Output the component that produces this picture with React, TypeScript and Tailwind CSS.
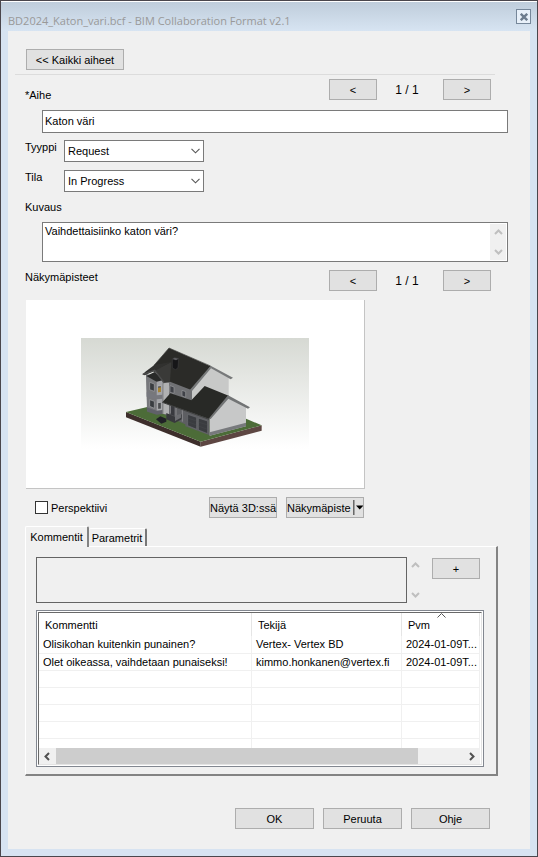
import React from 'react';

const BUTTON =
  'h-[21px] shrink-0 border border-[#adadad] bg-[#e1e1e1] flex items-center justify-center whitespace-nowrap hover:bg-[#e5f1fb] hover:border-[#0078d7]';

interface PagerProps {
  name: string;
}

const Pager: React.FC<PagerProps> = ({ name }) => (
  <div className="mr-[17px] flex items-center">
    <button type="button" aria-label={`${name}: previous`} className={`${BUTTON} w-12`}>
      &lt;
    </button>
    <span className="w-[66px] pr-[6px] text-center text-xs">1 / 1</span>
    <button type="button" aria-label={`${name}: next`} className={`${BUTTON} w-12`}>
      &gt;
    </button>
  </div>
);

interface ChevronProps {
  className?: string;
  direction: 'up' | 'down' | 'left' | 'right';
}

const CHEVRONS = {
  up: 'M1 6 L4.5 2.5 L8 6',
  down: 'M1 3 L4.5 6.5 L8 3',
  left: 'M6 1 L2.5 4.5 L6 8',
  right: 'M3 1 L6.5 4.5 L3 8',
};

const Chevron: React.FC<ChevronProps> = ({ className, direction }) => (
  <svg viewBox="0 0 9 9" className={`h-[9px] w-[9px] ${className ?? ''}`} fill="none" stroke="currentColor" strokeWidth="2">
    <path d={CHEVRONS[direction]} />
  </svg>
);

interface DropdownProps {
  id: string;
  label: string;
  options: string[];
}

const Dropdown: React.FC<DropdownProps> = ({ id, label, options }) => (
  <div className="flex h-[22px] items-start">
    <label htmlFor={id} className="w-[39px] shrink-0">
      {label}
    </label>
    <div className="relative w-[140px]">
      <select id={id} className="block h-[22px] w-full appearance-none border border-[#7a7a7a] bg-white pl-[3px] outline-none">
        {options.map((option) => (
          <option key={option}>{option}</option>
        ))}
      </select>
      <svg viewBox="0 0 9 6" className="pointer-events-none absolute right-1 top-2 h-[6px] w-[9px]" fill="none" stroke="#555" strokeWidth="1.1">
        <path d="M0.5 0.8 L4.5 4.8 L8.5 0.8" />
      </svg>
    </div>
  </div>
);

const House: React.FC = () => (
  <svg viewBox="-87 24 684 333" className="h-[111px] w-[228px]" role="img" aria-label="3D">
    <defs>
      <linearGradient id="sky" x1="0" y1="0" x2="0" y2="1">
        <stop offset="0" stopColor="#d6d9d3" />
        <stop offset="1" stopColor="#ffffff" />
      </linearGradient>
    </defs>
    <rect x="-87" y="24" width="684" height="333" fill="url(#sky)" />

    {/* plot */}
    <path d="M48 246 L272 335 L272 350 L48 262Z" fill="#3d2e2b" />
    <path d="M272 335 L455 286 L455 302 L272 350Z" fill="#5d4642" />
    <path d="M48 246 L112 231 L230 190 L455 286 L272 335Z" fill="#4c6c38" />

    {/* main house */}
    <path d="M108 132 L180 150 L246 178 L246 290 L160 252 L112 244Z" fill="#707174" />
    <path d="M246 177 L302 113 L356 143 L356 200 L246 260Z" fill="#c8c9c8" />
    <path d="M160 155 L177 158 L177 252 L160 252Z" fill="#b0b1b2" />

    {/* bay */}
    <path d="M109 135 L140 153 L140 252 L111 243Z" fill="#77787b" />
    <path d="M140 153 L158 150 L157 252 L140 252Z" fill="#a3a4a8" />
    <path d="M110 187 L140 196 L157 194 L157 206 L140 208 L110 200Z" fill="#77787e" />
    <path d="M110 232 L140 242 L157 240 L157 252 L140 254 L112 245Z" fill="#606169" />
    <path d="M119 157 L133 162 L133 184 L119 179Z M119 209 L133 214 L133 235 L119 229Z" fill="#393c40" stroke="#a4a5a8" strokeWidth="2" />
    <path d="M143 168 L154 167 L154 187 L143 188Z M143 218 L154 217 L154 237 L143 238Z" fill="#4b4d50" stroke="#c0c1c3" strokeWidth="2" />
    <path d="M144 173 L153 172 L153 186 L144 187Z" fill="#a58335" />

    {/* main roof with the front gable */}
    <path d="M177 54 L302 109 L246 181 L180 155 L128 122 L132 106Z" fill="#2b2b28" />
    <path d="M109 138 L134 126 L160 150 L140 155Z" fill="#292a29" />
    <path d="M133 121 L184 96 L180 156 L163 159Z" fill="#3a3a38" />
    <path d="M98 133 L106 125 L134 104 L184 96 L135 122 L104 136Z" fill="#31312f" />
    <path d="M98 133 L134 121 L163 159" fill="none" stroke="#4c4c4c" strokeWidth="4" />
    <path d="M302 107 L369 143 L362 148 L303 115 L246 183 L240 179Z" fill="#77797a" />
    <path d="M132 106 L177 54 L302 108" fill="none" stroke="#434341" strokeWidth="2" />
    <path d="M187 87 L194 83 L206 86 L204 113 L197 119 L187 114Z" fill="#161618" stroke="#454547" strokeWidth="1.5" />
    <path d="M187 87 L194 83 L206 86 L198 91Z" fill="#5c5c5f" />

    {/* upper windows */}
    <path d="M180 167 L192 171 L192 190 L180 187Z M216 181 L227 185 L227 202 L216 198Z" fill="#404248" stroke="#97999c" strokeWidth="2" />

    {/* porch */}
    <path d="M178 211 L229 232 L229 284 L178 262Z" fill="#5e5f63" />
    <path d="M180 219 L193 224 L193 258 L180 253Z" fill="#393a3f" />
    <path d="M198 220 L198 265 M181 221 L181 251 M217 235 L217 275" stroke="#88898c" strokeWidth="3" />
    <path d="M169 249 L195 260 L215 253 L215 268 L194 279 L169 268Z" fill="#38393d" />
    <path d="M195 257 L213 251 L213 263 L195 273Z" fill="#6c6d71" />
    <path d="M138 268 L151 259 L169 266 L169 275 L154 281Z" fill="#202126" />

    {/* garage */}
    <path d="M228 241 L299 265 L299 316 L226 289Z" fill="#5d5e62" />
    <path d="M233 253 L260 262 L260 298 L233 287Z M265 264 L293 273 L293 311 L265 300Z" fill="#3a3c40" stroke="#6e7073" strokeWidth="2" />
    <path d="M233 264 L260 273 M233 275 L260 285 M265 276 L293 285 M265 288 L293 298" stroke="#4d4f53" strokeWidth="1" />
    <path d="M299 266 L354 201 L408 226 L408 289 L299 317Z" fill="#c7c8c8" />
    <path d="M299 307 L408 278 L408 289 L299 317Z" fill="#77797c" />
    <path d="M284 168 L356 197 L299 267 L157 217 L181 190 L244 211Z" fill="#282926" />
    <path d="M354 196 L420 232 L414 236 L355 206 L302 267 L296 266Z" fill="#727475" />
    <path d="M157 217 L297 268" stroke="#3f403f" strokeWidth="3" />
  </svg>
);

const comments = [
  { text: 'Olisikohan kuitenkin punainen?', author: 'Vertex- Vertex BD', date: '2024-01-09T...' },
  { text: 'Olet oikeassa, vaihdetaan punaiseksi!', author: 'kimmo.honkanen@vertex.fi', date: '2024-01-09T...' },
  { text: '', author: '', date: '' },
  { text: '', author: '', date: '' },
  { text: '', author: '', date: '' },
  { text: '', author: '', date: '' },
];

const CommentTable: React.FC = () => (
  <div className="mr-3 mt-[7px] border border-[#828790] bg-white p-px">
    <div className="border border-b-[#e3e3e3] border-l-[#696969] border-r-[#e3e3e3] border-t-[#696969] pr-px">
      <table className="w-full table-fixed border-collapse text-left">
        <colgroup>
          <col />
          <col className="w-[150px]" />
          <col className="w-[78px]" />
        </colgroup>
        <thead>
          <tr className="h-[23px]">
            <th className="border-r border-[#e5e5e5] p-0 pl-[6px] font-normal">Kommentti</th>
            <th className="border-r border-[#e5e5e5] p-0 pl-[6px] font-normal">Tekijä</th>
            <th className="relative border-r border-[#e5e5e5] p-0 pl-[6px] font-normal">
              Pvm
              <svg viewBox="0 0 9 5" className="absolute left-[35px] top-0 h-[5px] w-[9px]" fill="none" stroke="#555">
                <path d="M0.5 4.5 L4.5 0.5 L8.5 4.5" />
              </svg>
            </th>
          </tr>
        </thead>
        <tbody>
          {comments.map((comment, i) => (
            <tr key={i} className="h-[17px] border-b border-[#f0f0f0] leading-[14px]">
              <td className="whitespace-nowrap border-r border-[#f0f0f0] p-0 pl-1">{comment.text}</td>
              <td className="whitespace-nowrap border-r border-[#f0f0f0] p-0 pl-1">{comment.author}</td>
              <td className="whitespace-nowrap border-r border-[#f0f0f0] p-0 pl-1">{comment.date}</td>
            </tr>
          ))}
          <tr className="h-[10px]">
            <td className="border-r border-[#f0f0f0] p-0" />
            <td className="border-r border-[#f0f0f0] p-0" />
            <td className="border-r border-[#f0f0f0] p-0" />
          </tr>
        </tbody>
      </table>
      <div className="flex h-4 items-center bg-[#f0f0f0] text-[#505050]">
        <div className="flex w-[17px] justify-center">
          <Chevron direction="left" />
        </div>
        <div className="flex h-full flex-1">
          <div className="h-full w-[89%] bg-[#cdcdcd]" />
        </div>
        <div className="flex w-[17px] justify-center">
          <Chevron direction="right" />
        </div>
      </div>
    </div>
  </div>
);

const App: React.FC = () => {
  const [topic, setTopic] = React.useState('Katon väri');
  const [description, setDescription] = React.useState('Vaihdettaisiinko katon väri?');
  const [comment, setComment] = React.useState('');

  return (
    <div className="flex min-h-screen flex-col border border-[#4a464c] bg-[#d7e3f1] font-['Liberation_Sans',Arial,sans-serif] text-[11px] leading-[14px] text-black">
      {/* Title bar */}
      <header className="flex h-[30px] items-center justify-between border-t border-white bg-linear-to-b from-[#bfcddb] to-[#d7e4f2] pl-[7px] pr-[6px]">
        <h1 className="pt-2 font-['Open_Sans','Noto_Sans',sans-serif] text-[11px] text-[#999999]">
          BD2024_Katon_vari.bcf - BIM Collaboration Format v2.1
        </h1>
        <button type="button" aria-label="Close" className="flex h-[15px] w-[15px] items-center justify-center border border-[#76879a] bg-[#e8f0f9]">
          <svg viewBox="0 0 8 8" className="h-2 w-2" stroke="#6c7c8e" strokeWidth="2.4">
            <path d="M0.8 0.8 L7.2 7.2 M7.2 0.8 L0.8 7.2" />
          </svg>
        </button>
      </header>

      <main className="mx-[7px] mb-[7px] flex-1 bg-[#f0f0f0] pb-5 pl-[17px] pr-[22px] pt-[18px]">
        <button type="button" className={`${BUTTON} ml-px w-[98px]`}>
          &lt;&lt; Kaikki aiheet
        </button>
        <hr className="-ml-[10px] mr-[13px] mt-1 border-[#dcdcdc]" />

        <div className="mt-1 flex h-[21px] items-start justify-between">
          <label htmlFor="topic" className="pt-[9px]">
            *Aihe
          </label>
          <Pager name="Aihe" />
        </div>
        <input
          id="topic"
          value={topic}
          onChange={(e) => setTopic(e.target.value)}
          className="ml-[17px] mt-[10px] block h-[23px] w-[calc(100%-17px)] border border-[#7a7a7a] bg-white px-[2px] pb-[2px] outline-none"
        />

        <div className="mt-[7px] flex flex-col gap-2">
          <Dropdown id="type" label="Tyyppi" options={['Request']} />
          <Dropdown id="status" label="Tila" options={['In Progress']} />
        </div>

        <label htmlFor="description" className="mt-2 block">
          Kuvaus
        </label>
        <div className="ml-[17px] mt-2 flex h-10 border border-[#7a7a7a] bg-white p-px">
          <textarea
            id="description"
            value={description}
            onChange={(e) => setDescription(e.target.value)}
            className="flex-1 resize-none overflow-hidden px-px outline-none"
          />
          <div className="flex w-4 flex-col items-center justify-between bg-[#f0f0f0] py-1 text-[#bfbfbf]">
            <Chevron direction="up" />
            <Chevron direction="down" />
          </div>
        </div>

        <div className="mt-2 flex h-[21px] items-start justify-between">
          <h2>Näkymäpisteet</h2>
          <Pager name="Näkymäpisteet" />
        </div>
        <div className="ml-px mt-[9px] flex h-[189px] w-[339px] justify-center border-b border-r border-[#c4c4c4] bg-white pt-[38px]">
          <House />
        </div>

        <div className="mt-2 flex w-[339px] items-center gap-[9px]">
          <label className="ml-[10px] flex flex-1 items-center gap-[3px]">
            <input type="checkbox" className="h-[13px] w-[13px] appearance-none border border-[#333333] bg-white checked:bg-[#333333]" />
            Perspektiivi
          </label>
          <button type="button" className={`${BUTTON} w-[68px]`}>
            Näytä 3D:ssä
          </button>
          <button type="button" className={`${BUTTON} w-[78px]`}>
            Näkymäpiste
            <span className="ml-[2px] h-[15px] w-[2px] border-l border-r border-l-[#696969] border-r-[#a0a0a0]" />
            <svg viewBox="0 0 9 5" className="ml-px h-[5px] w-[9px]">
              <path d="M0 0 H9 L4.5 5Z" />
            </svg>
          </button>
        </div>

        {/* Tabs */}
        <div role="tablist" className="mt-2 flex items-end">
          <button type="button" role="tab" aria-selected="true" className="relative z-10 -mb-px h-[21px] w-16 rounded-t-[2px] border-l border-r-2 border-t border-l-white border-r-[#838383] border-t-white bg-[#f0f0f0]">
            Kommentit
          </button>
          <button type="button" role="tab" aria-selected="false" className="h-[18px] w-[58px] rounded-t-[2px] border-r-2 border-t border-r-[#777777] border-t-white">
            Parametrit
          </button>
        </div>
        <section className="mr-[10px] border-b-2 border-l border-r-2 border-t border-b-[#838383] border-l-white border-r-[#838383] border-t-white pb-[7px] pl-[10px] pt-[10px]">
          <div className="flex items-start">
            <textarea
              aria-label="Kommentti"
              value={comment}
              onChange={(e) => setComment(e.target.value)}
              className="block h-[46px] flex-1 resize-none border border-[#646464] bg-transparent p-1 outline-none"
            />
            <div className="flex h-[46px] w-4 flex-col items-center justify-between py-1 text-[#bfbfbf]">
              <Chevron direction="up" />
              <Chevron direction="down" />
            </div>
            <button type="button" aria-label="+" className={`${BUTTON} ml-[9px] mr-4 mt-px w-12`}>
              +
            </button>
          </div>
          <CommentTable />
        </section>

        <footer className="mr-[18px] mt-8 flex justify-end gap-[9px]">
          <button type="button" className={`${BUTTON} w-[79px]`}>
            OK
          </button>
          <button type="button" className={`${BUTTON} w-[79px]`}>
            Peruuta
          </button>
          <button type="button" className={`${BUTTON} w-[79px]`}>
            Ohje
          </button>
        </footer>
      </main>
    </div>
  );
};

export default App;
